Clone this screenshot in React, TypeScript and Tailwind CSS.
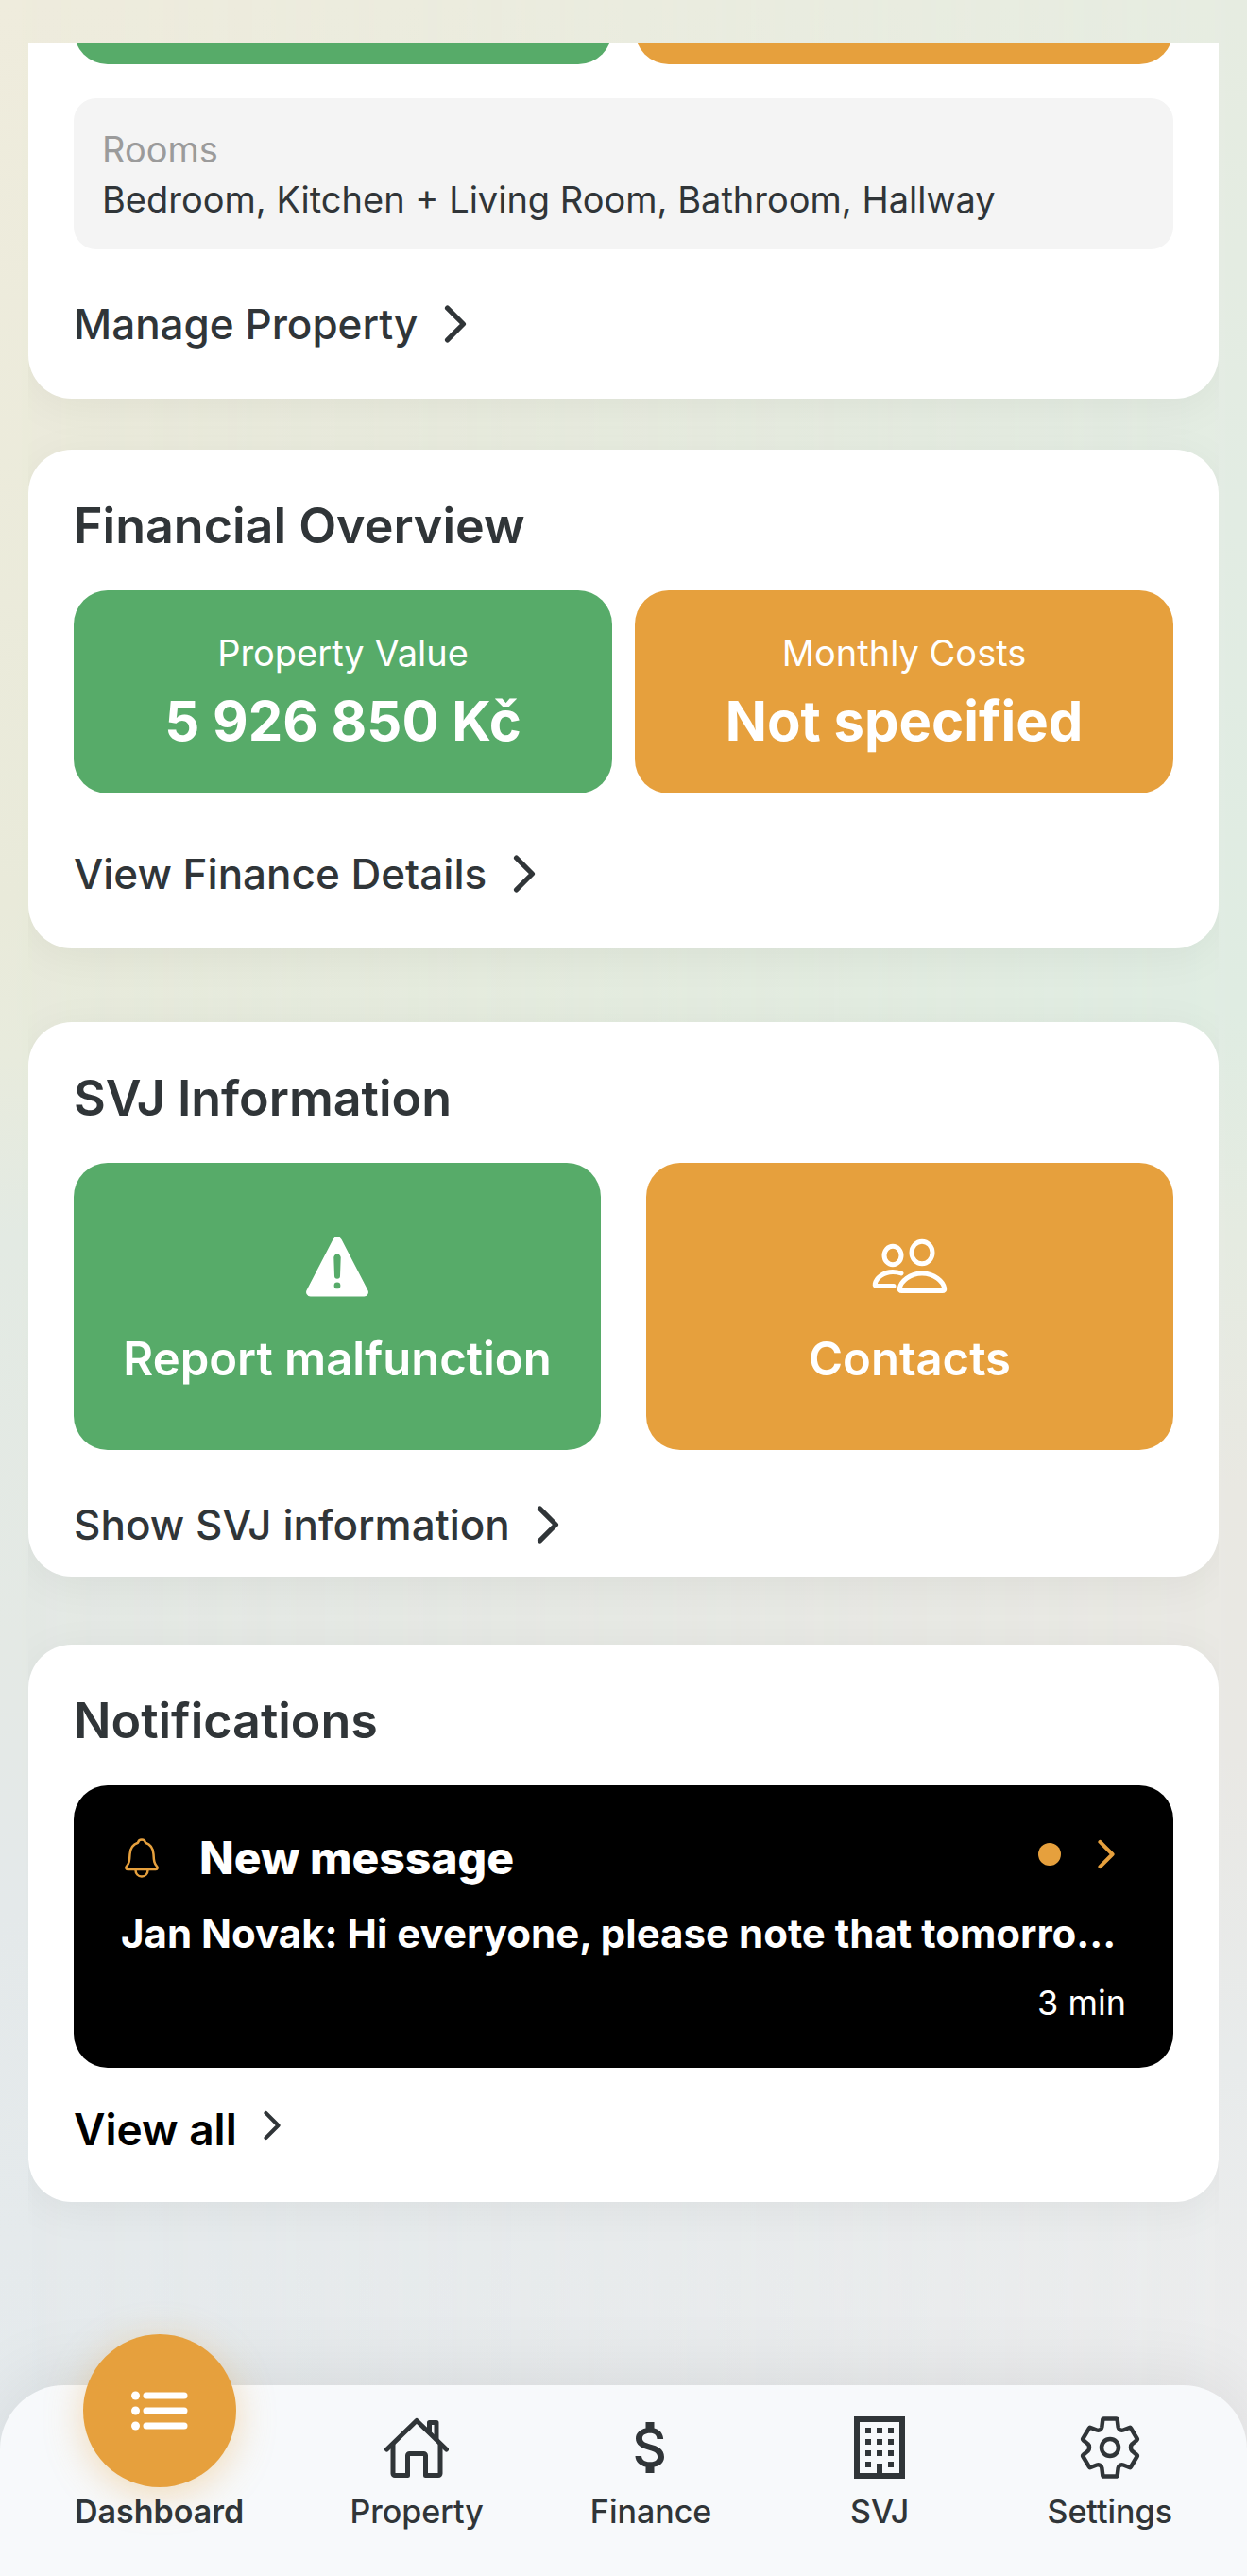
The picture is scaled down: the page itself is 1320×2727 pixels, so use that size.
import React from 'react';

type IconProps = { className?: string };

const ChevronIcon: React.FC<IconProps> = ({ className }) => (
  <svg viewBox="0 0 22 38" fill="none" stroke="currentColor" className={className} aria-hidden="true">
    <path d="M3 3l16 16L3 35" strokeWidth="5" strokeLinecap="round" strokeLinejoin="round" />
  </svg>
);

const WarningIcon: React.FC<IconProps> = ({ className }) => (
  <svg viewBox="0 0 66 64" className={className} aria-hidden="true">
    <path
      fill="currentColor"
      fillRule="evenodd"
      d="M28.5 3a5 5 0 0 1 9 0l27.7 53.5a4.6 4.6 0 0 1-4.2 7H5a4.6 4.6 0 0 1-4.2-7zM33 18.500a3.700 3.700 0 0 0-3.700 3.900l.7 19.300a3 3 0 0 0 6 0l.7-19.300a3.700 3.700 0 0 0-3.700-3.900zM33 48.500a3.400 3.400 0 1 0 0 6.800 3.400 3.400 0 0 0 0-6.800z"
    />
  </svg>
);

const ContactsIcon: React.FC<IconProps> = ({ className }) => (
  <svg
    viewBox="0 0 80 64"
    fill="none"
    stroke="currentColor"
    strokeWidth="5"
    strokeLinecap="round"
    strokeLinejoin="round"
    className={className}
    aria-hidden="true"
  >
    <ellipse cx="22" cy="20" rx="9" ry="9.800" />
    <ellipse cx="53" cy="17" rx="11" ry="11.800" />
    <path d="M31 39c-3-1-6-1.500-9-1.500-10 0-17.500 6.500-18.700 12.500-.4 1.800.4 2.500 1.700 2.500h18" />
    <path d="M53 39c13 0 22.500 8.500 23.700 15.800.3 1.800-.5 2.700-2.200 2.700h-43c-1.700 0-2.500-.9-2.200-2.700C30.500 47.500 40 39 53 39z" />
  </svg>
);

const BellIcon: React.FC<IconProps> = ({ className }) => (
  <svg
    viewBox="0 0 36 42"
    fill="none"
    stroke="currentColor"
    strokeWidth="2.500"
    strokeLinejoin="round"
    className={className}
    aria-hidden="true"
  >
    <path d="M18 1.500c-2.200 0-3.600 1.300-4 3.300C8.500 6.600 5.800 11 5.500 17c-.3 7-.8 9.500-3.700 13-.9 1.200-.5 3 1.200 3h30c1.700 0 2.100-1.800 1.200-3-2.900-3.500-3.400-6-3.700-13-.3-6-3-10.400-8.500-12.200-.4-2-1.800-3.300-4-3.300z" />
    <path d="M11.500 33.500c0 4 2.700 7 6.500 7s6.500-3 6.500-7" />
  </svg>
);

const ListIcon: React.FC<IconProps> = ({ className }) => (
  <svg viewBox="0 0 60 42" fill="currentColor" className={className} aria-hidden="true">
    <circle cx="4.500" cy="5" r="4.500" />
    <circle cx="4.500" cy="21" r="4.500" />
    <circle cx="4.500" cy="37" r="4.500" />
    <rect x="12.500" y="1.500" width="47" height="7" rx="3.500" />
    <rect x="12.500" y="17.500" width="47" height="7" rx="3.500" />
    <rect x="12.500" y="33.500" width="47" height="7" rx="3.500" />
  </svg>
);

const HouseIcon: React.FC<IconProps> = ({ className }) => (
  <svg
    viewBox="0 0 68 66"
    fill="none"
    stroke="currentColor"
    strokeWidth="5"
    strokeLinecap="round"
    strokeLinejoin="round"
    className={className}
    aria-hidden="true"
  >
    <path d="M2.500 35L34 4.500 65.500 35" />
    <path d="M9 30v30.500a2 2 0 0 0 2 2h13.500V41.500a2 2 0 0 1 2-2h15a2 2 0 0 1 2 2v21H57a2 2 0 0 0 2-2V30" />
    <path d="M47.500 16V6.500h7.500V24" />
  </svg>
);

const DollarIcon: React.FC<IconProps> = ({ className }) => (
  <svg viewBox="5.500 2 13 20" fill="currentColor" className={className} aria-hidden="true">
    <path d="M11.800 10.900c-2.270-.59-3-1.200-3-2.150 0-1.090 1.010-1.850 2.700-1.850 1.780 0 2.440.85 2.500 2.100h2.210c-.07-1.720-1.120-3.300-3.210-3.810V3h-3v2.160c-1.940.42-3.500 1.680-3.500 3.610 0 2.310 1.910 3.460 4.700 4.130 2.500.6 3 1.480 3 2.410 0 .69-.49 1.790-2.700 1.790-2.060 0-2.870-.92-2.980-2.100h-2.200c.12 2.190 1.760 3.420 3.680 3.830V21h3v-2.150c1.950-.37 3.500-1.500 3.500-3.550 0-2.840-2.430-3.810-4.700-4.400z" />
  </svg>
);

const windowCells = [0, 1, 2, 3].flatMap((row) =>
  [0, 1, 2].filter((col) => !(row === 3 && col === 1)).map((col) => ({ x: 12 + col * 12, y: 12 + row * 12 })),
);

const BuildingIcon: React.FC<IconProps> = ({ className }) => (
  <svg viewBox="0 0 54 66" fill="currentColor" className={className} aria-hidden="true">
    <path fillRule="evenodd" d="M0 0h54v66H0zM6 6v54h42V6z" />
    {windowCells.map(({ x, y }) => (
      <rect key={`${x}-${y}`} x={x} y={y} width="6" height="6" />
    ))}
    <rect x="24" y="50" width="6" height="12" />
  </svg>
);

const GearIcon: React.FC<IconProps> = ({ className }) => (
  <svg
    viewBox="0 0 64 66"
    fill="none"
    stroke="currentColor"
    strokeWidth="4.500"
    strokeLinejoin="round"
    className={className}
    aria-hidden="true"
  >
    <circle cx="32" cy="33" r="9" />
    <path d="M25.500 2.500h13q1 0 1.200 1l1 8q.3 2 2 2.800t3.300.2l6.500-2.500q1-.4 1.600.6l6.500 10.900q.6 1-.3 1.700l-5 4.200q-1.300 1-1.300 3.600t1.300 3.600l5 4.200q.9.700.3 1.700l-6.500 10.900q-.6 1-1.600.6L46 51.500q-1.600-.6-3.300.2t-2 2.800l-1 8q-.2 1-1.200 1h-13q-1 0-1.200-1l-1-8q-.3-2-2-2.800t-3.300-.2l-6.500 2.500q-1 .4-1.600-.6L3.400 42.500q-.6-1 .3-1.700l5-4.200q1.300-1 1.300-3.600t-1.300-3.600l-5-4.200q-.9-.7-.3-1.700l6.500-10.900q.6-1 1.600-.6l6.500 2.500q1.600.6 3.300-.2t2-2.800l1-8q.2-1 1.200-1z" />
  </svg>
);

type CardProps = { title?: string; className?: string; children: React.ReactNode };

const Card: React.FC<CardProps> = ({ title, className = '', children }) => (
  <section className={`bg-white px-12 shadow-[0_8px_48px_rgba(0,0,0,0.05)] ${className}`}>
    {title && <h2 className="mb-9 pt-12 text-[52px] leading-[65px] font-semibold">{title}</h2>}
    {children}
  </section>
);

const CardLink: React.FC<{ label: string; className?: string }> = ({ label, className = '' }) => (
  <a href="#" className={`flex w-fit items-center gap-7 text-[44px] leading-[56px] font-medium ${className}`}>
    {label}
    <ChevronIcon className="h-10 w-6" />
  </a>
);

const StatTile: React.FC<{ label: string; value: string; className: string }> = ({ label, value, className }) => (
  <div className={`flex-1 rounded-[36px] pt-[42px] pb-[41px] text-center text-white ${className}`}>
    <p className="text-[38px] leading-[48px]">{label}</p>
    <p className="mt-3 text-[58px] leading-[72px] font-bold">{value}</p>
  </div>
);

type ActionTileProps = { label: string; icon: React.ReactNode; className: string };

const ActionTile: React.FC<ActionTileProps> = ({ label, icon, className }) => (
  <button
    type="button"
    className={`flex flex-1 flex-col items-center gap-9 rounded-[36px] pt-[78px] pb-[66px] text-white ${className}`}
  >
    {icon}
    <span className="text-[49px] leading-[60px] font-semibold">{label}</span>
  </button>
);

const navItems = [
  { label: 'Property', icon: <HouseIcon className="h-[66px] w-[68px]" /> },
  { label: 'Finance', icon: <DollarIcon className="h-[60px] w-[39px]" /> },
  { label: 'SVJ', icon: <BuildingIcon className="h-[66px] w-[54px]" /> },
  { label: 'Settings', icon: <GearIcon className="h-[66px] w-[64px]" /> },
];

const BottomNav: React.FC = () => (
  <nav className="relative mt-auto flex items-end justify-between rounded-t-[68px] bg-[#f7f9fb] px-[79px] pb-12 text-[34px] leading-10 font-medium shadow-[0_-8px_80px_rgba(0,0,0,0.08)]">
    <a href="#" aria-current="page" className="-mt-[54px] flex flex-col items-center gap-1.5 font-semibold">
      <span className="flex size-[162px] items-center justify-center rounded-full bg-[#e6a03d] text-white shadow-[0_8px_40px_rgba(230,160,61,0.35)]">
        <ListIcon className="h-[42px] w-[60px]" />
      </span>
      Dashboard
    </a>
    {navItems.map(({ label, icon }) => (
      <a key={label} href="#" className="flex min-w-[130px] flex-col items-center gap-[15px]">
        <span className="flex h-[66px] items-center">{icon}</span>
        {label}
      </a>
    ))}
  </nav>
);

const App: React.FC = () => {
  return (
    <div className="relative isolate flex min-h-screen flex-col bg-[linear-gradient(to_bottom,#efecdd_0%,#e9eada_35%,#e8ebdd_41%,#e3eae3_48%,#e4e9e5_64%,#e4e9ea_74%,#e6ebee_100%)] font-['Inter','Liberation_Sans',sans-serif] text-[#303538]">
      <div className="absolute inset-0 -z-10 bg-[linear-gradient(to_bottom,#e6ece1_0%,#e2ece3_20%,#dfece2_39%,#e5ebe1_48%,#e9e8e2_58%,#e9e8e4_68%,#e8ebeb_80%,#ededee_95%)] mask-[linear-gradient(to_right,transparent,black)]" />

      <main className="mx-[30px] mt-[45px] flex flex-col overflow-hidden pb-20">
        <Card className="rounded-b-[46px] pb-[51px]">
          <div className="-mt-[41px] flex gap-6">
            <div className="h-16 flex-1 rounded-b-[36px] bg-[#57ab69]" />
            <div className="h-16 flex-1 rounded-b-[36px] bg-[#e6a03d]" />
          </div>
          <div className="mt-9 rounded-3xl bg-[#f4f4f4] px-[30px] pt-7 pb-[26px] text-[38px] leading-[53px]">
            <p className="text-[#9b9b9b]">Rooms</p>
            <p>Bedroom, Kitchen + Living Room, Bathroom, Hallway</p>
          </div>
          <CardLink label="Manage Property" className="mt-[51px]" />
        </Card>

        <Card title="Financial Overview" className="mt-[54px] rounded-[46px] pb-[51px]">
          <div className="flex gap-6">
            <StatTile label="Property Value" value="5 926 850 Kč" className="bg-[#57ab69]" />
            <StatTile label="Monthly Costs" value="Not specified" className="bg-[#e6a03d]" />
          </div>
          <CardLink label="View Finance Details" className="mt-[57px]" />
        </Card>

        <Card title="SVJ Information" className="mt-[78px] rounded-[46px] pb-[27px]">
          <div className="flex gap-12">
            <ActionTile
              label="Report malfunction"
              icon={<WarningIcon className="h-16 w-[66px]" />}
              className="bg-[#57ab69]"
            />
            <ActionTile label="Contacts" icon={<ContactsIcon className="h-16 w-20" />} className="bg-[#e6a03d]" />
          </div>
          <CardLink label="Show SVJ information" className="mt-[51px]" />
        </Card>

        <Card title="Notifications" className="mt-[72px] rounded-[46px] pb-[49px]">
          <a href="#" className="block rounded-[36px] bg-black px-[50px] pt-[49px] pb-[47px] text-white">
            <div className="flex items-center">
              <BellIcon className="ml-1 h-[42px] w-9 text-[#e6a03d]" />
              <h3 className="ml-[43px] text-[48px] leading-[56px] font-extrabold">New message</h3>
              <div className="mr-3 ml-auto flex h-12 items-center gap-[39px] self-start text-[#e6a03d]">
                <span className="size-6 rounded-full bg-[#e6a03d]" />
                <ChevronIcon className="h-8 w-[18px]" />
              </div>
            </div>
            <p className="mt-7 text-[42px] leading-[48px] font-bold">
              Jan Novak: Hi everyone, please note that tomorro...
            </p>
            <p className="mt-[27px] text-right text-[36px] leading-[44px]">3 min</p>
          </a>
          <a
            href="#"
            className="mt-[37px] flex w-fit items-center gap-7 text-[46px] leading-[56px] font-semibold text-black"
          >
            View all
            <span className="flex h-12 items-center self-start text-[#303538]">
              <ChevronIcon className="h-8 w-[18px]" />
            </span>
          </a>
        </Card>
      </main>

      <BottomNav />
    </div>
  );
};

export default App;
